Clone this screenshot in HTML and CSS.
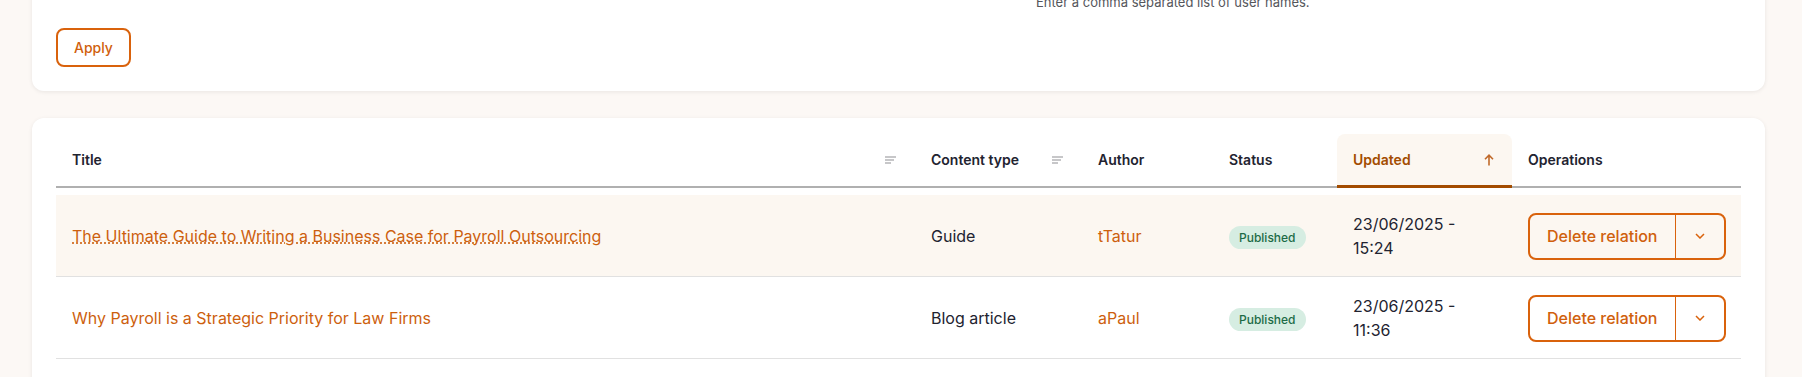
FILE: index.html
```html
<!DOCTYPE html>
<html>
<head>
<meta charset="UTF-8">
<title>Content</title>
<link rel="stylesheet" href="styles.css">
</head>
<body>
<div class="page">

  <!-- exposed filters -->
  <form class="card filters">
    <div class="filter-row">
      <div class="field">
        <label for="f-title">Title</label>
        <input type="text" id="f-title">
      </div>
      <div class="field">
        <label for="f-type">Content type</label>
        <input type="text" id="f-type" value="- Any -">
      </div>
      <div class="field">
        <label for="f-author">Authored by</label>
        <input type="text" id="f-author">
        <div class="description">Enter a comma separated list of user names.</div>
      </div>
    </div>
    <div class="actions">
      <button type="button" class="button">Apply</button>
    </div>
  </form>

  <div class="card table-card">
    <table class="views-table">
      <colgroup>
        <col style="width:859px">
        <col style="width:167px">
        <col style="width:131px">
        <col style="width:124px">
        <col style="width:175px">
        <col style="width:229px">
      </colgroup>
      <thead>
        <tr>
          <th><span class="th-inner">Title
            <svg class="sort-icon" width="12" height="8" viewBox="0 0 12 8"><path d="M0 1h11M0 4h9M0 7h6" stroke="#b5b5b8" stroke-width="1.4" fill="none"/></svg></span></th>
          <th><span class="th-inner">Content type
            <svg class="sort-icon" width="12" height="8" viewBox="0 0 12 8"><path d="M0 1h11M0 4h9M0 7h6" stroke="#b5b5b8" stroke-width="1.4" fill="none"/></svg></span></th>
          <th>Author</th>
          <th>Status</th>
          <th class="is-active"><span class="th-inner">Updated
            <svg class="sort-icon" width="10" height="12" viewBox="0 0 10 12"><path d="M5 11.5V1.2M1 5.2l4-4 4 4" stroke="#c0692a" stroke-width="1.6" fill="none"/></svg></span></th>
          <th>Operations</th>
        </tr>
      </thead>
      <tbody>
        <tr class="is-highlighted">
          <td><a href="#" class="title-link hover">The Ultimate Guide to Writing a Business Case for Payroll Outsourcing</a></td>
          <td>Guide</td>
          <td><a href="#" class="user-link">tTatur</a></td>
          <td><span class="badge">Published</span></td>
          <td>23/06/2025 - 15:24</td>
          <td>
            <div class="dropbutton">
              <a href="#" class="drop-main">Delete relation</a>
              <span class="drop-toggle"><svg width="10" height="6" viewBox="0 0 10 6"><path d="M1 1l4 4 4-4" stroke="#d9620c" stroke-width="1.5" fill="none"/></svg></span>
            </div>
          </td>
        </tr>
        <tr>
          <td><a href="#" class="title-link">Why Payroll is a Strategic Priority for Law Firms</a></td>
          <td>Blog article</td>
          <td><a href="#" class="user-link">aPaul</a></td>
          <td><span class="badge">Published</span></td>
          <td>23/06/2025 - 11:36</td>
          <td>
            <div class="dropbutton">
              <a href="#" class="drop-main">Delete relation</a>
              <span class="drop-toggle"><svg width="10" height="6" viewBox="0 0 10 6"><path d="M1 1l4 4 4-4" stroke="#d9620c" stroke-width="1.5" fill="none"/></svg></span>
            </div>
          </td>
        </tr>
        <tr>
          <td><a href="#" class="title-link">Payroll Outsourcing Checklist</a></td>
          <td>Guide</td>
          <td><a href="#" class="user-link">aPaul</a></td>
          <td><span class="badge">Published</span></td>
          <td>20/06/2025 - 09:12</td>
          <td>
            <div class="dropbutton">
              <a href="#" class="drop-main">Delete relation</a>
              <span class="drop-toggle"><svg width="10" height="6" viewBox="0 0 10 6"><path d="M1 1l4 4 4-4" stroke="#d9620c" stroke-width="1.5" fill="none"/></svg></span>
            </div>
          </td>
        </tr>
      </tbody>
    </table>
  </div>

</div>
</body>
</html>
```

FILE: styles.css
```css
body {
  margin: 0;
  background-color: #fcf8f5;
  font-family: Inter, "Noto Sans", sans-serif;
  color: #222330;
}

.page {
  padding: 0 37px 0 32px;
}

.card {
  background-color: #fff;
  border-radius: 12px;
  box-shadow: 0 1px 4px rgba(0, 0, 0, 0.08);
}

/* filters card, scrolled so only its bottom shows */
.filters {
  display: block;
  margin: -103px 0 0 0;
  padding: 24px;
}

.filter-row {
  display: flex;
  gap: 20px;
}

.field {
  width: 470px;
  display: flex;
  flex-direction: column;
  gap: 6px;
}

.field label {
  font-size: 14px;
  font-weight: 600;
  line-height: 20px;
}

.field input {
  height: 40px;
  box-sizing: border-box;
  border: 1px solid #8e929c;
  border-radius: 6px;
  font-family: inherit;
}

.description {
  font-size: 13px;
  line-height: 18px;
  color: #55565b;
}

.actions {
  margin-top: 17px;
}

.button {
  font-family: inherit;
  font-size: 14px;
  font-weight: 500;
  line-height: 19px;
  color: #d0600c;
  background-color: #fff;
  border: 2px solid #d9620c;
  border-radius: 8px;
  padding: 8px 16px;
}

/* table card */
.table-card {
  margin-top: 27px;
  padding: 16px 24px 24px;
}

.views-table {
  width: 100%;
  table-layout: fixed;
  border-collapse: separate;
  border-spacing: 0;
}

.views-table th {
  text-align: left;
  font-size: 14px;
  font-weight: 600;
  line-height: 20px;
  padding: 16px;
  border-bottom: 2px solid #b0b0b0;
}

.views-table th.is-active {
  color: #a34c00;
  background-color: #fcf7f1;
  border-bottom: 3px solid #a34c00;
  border-radius: 8px 8px 0 0;
  padding-bottom: 15px;
}

.th-inner {
  display: flex;
  align-items: center;
  justify-content: space-between;
  padding-right: 2px;
}

.views-table td {
  font-size: 16px;
  line-height: 24px;
  padding: 17px 16px 16px;
  border-bottom: 1px solid #e1e1e1;
  vertical-align: middle;
}

.views-table tbody tr:first-child td {
  border-top: 7px solid #fff;
}

.views-table tr.is-highlighted td {
  background-color: #fcf7f1;
}

.title-link,
.user-link {
  color: #cd5f0e;
  text-decoration: none;
}

.title-link.hover {
  text-decoration: underline dotted;
}

.badge {
  display: inline-block;
  height: 23px;
  line-height: 23px;
  padding: 0 10px;
  border-radius: 12px;
  background-color: #d6ede2;
  color: #1d6b46;
  font-size: 12px;
  font-weight: 500;
}

.dropbutton {
  display: inline-flex;
  height: 47px;
  box-sizing: border-box;
  border: 2px solid #d9620c;
  border-radius: 8px;
}

.drop-main {
  padding: 0 17px;
  line-height: 43px;
  font-size: 16px;
  font-weight: 500;
  color: #d0600c;
  text-decoration: none;
  white-space: nowrap;
}

.drop-toggle {
  width: 48px;
  border-left: 1px solid #d9620c;
  display: flex;
  align-items: center;
  justify-content: center;
}
```
